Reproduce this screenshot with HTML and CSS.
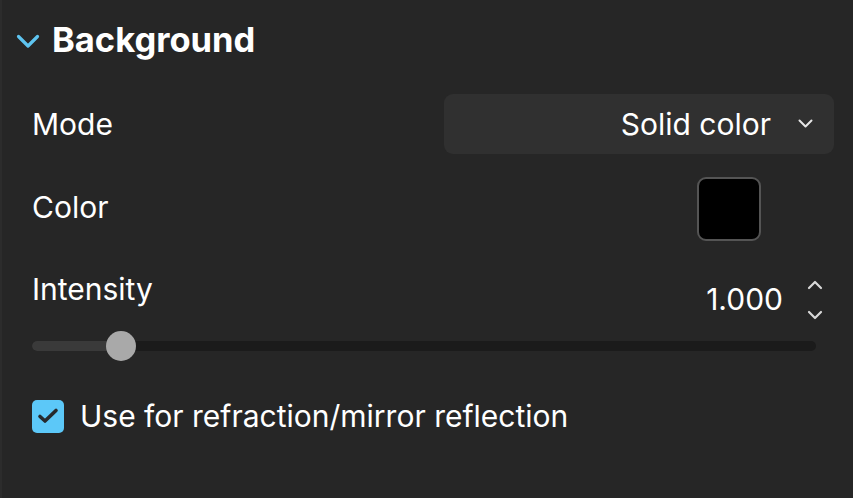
FILE: index.html
```html
<!DOCTYPE html>
<html>
<head>
<meta charset="utf-8">
<link rel="stylesheet" href="styles.css">
</head>
<body>
<div class="panel">
  <div class="header">
    <svg class="caret" width="24" height="16" viewBox="0 0 24 16"><path d="M2.5 2.5 L12 12 L21.5 2.5" fill="none" stroke="#5ec4f0" stroke-width="3.2" stroke-linecap="round" stroke-linejoin="round"/></svg>
    <span class="title">Background</span>
  </div>
  <div class="row mode-row">
    <span class="label">Mode</span>
    <div class="select">
      <span>Solid color</span>
      <svg width="15" height="10" viewBox="0 0 15 10"><path d="M1.5 1.5 L7.5 7.5 L13.5 1.5" fill="none" stroke="#e6e6e6" stroke-width="2" stroke-linecap="round" stroke-linejoin="round"/></svg>
    </div>
  </div>
  <div class="row color-row">
    <span class="label">Color</span>
    <div class="swatch"></div>
  </div>
  <div class="intensity">
    <span class="label">Intensity</span>
    <div class="value">
      <span>1.000</span>
      <div class="spin">
        <svg width="16" height="10" viewBox="0 0 16 10"><path d="M2 8 L8 2 L14 8" fill="none" stroke="#d8d8d8" stroke-width="2.2" stroke-linecap="round" stroke-linejoin="round"/></svg>
        <svg width="16" height="10" viewBox="0 0 16 10"><path d="M2 2 L8 8 L14 2" fill="none" stroke="#d8d8d8" stroke-width="2.2" stroke-linecap="round" stroke-linejoin="round"/></svg>
      </div>
    </div>
  </div>
  <div class="slider">
    <div class="fill" style="width: 89px"></div>
    <div class="thumb" style="left: 74px"></div>
  </div>
  <div class="check-row">
    <div class="checkbox">
      <svg width="24" height="18" viewBox="0 0 24 18"><path d="M4 9.5 L9 14 L20 3.5" fill="none" stroke="#262a2d" stroke-width="3.6" stroke-linecap="round" stroke-linejoin="round"/></svg>
    </div>
    <span class="label">Use for refraction/mirror reflection</span>
  </div>
</div>
</body>
</html>
```
FILE: styles.css
```css
html, body {
  margin: 0;
  padding: 0;
  background: #262626;
}
body {
  width: 853px;
  height: 498px;
  overflow: hidden;
  font-family: Inter, "Noto Sans", sans-serif;
  color: #ffffff;
}
.panel {
  height: 498px;
  box-sizing: border-box;
  border-left: 2px solid #2c2c2c;
  padding: 0 19px 0 30px;
}
.header {
  display: flex;
  align-items: center;
  height: 80px;
  margin-left: -16px;
}
.caret {
  margin-right: 12px;
  margin-top: 4px;
}
.title {
  font-size: 34.5px;
  font-weight: 700;
  margin-top: -2px;
}
.label {
  font-size: 30px;
}
.row {
  display: flex;
  align-items: center;
  justify-content: space-between;
}
.mode-row {
  margin-top: 14px;
  height: 60px;
}
.select {
  width: 390px;
  height: 60px;
  box-sizing: border-box;
  background: #303030;
  border-radius: 9px;
  display: flex;
  align-items: center;
  justify-content: flex-end;
  padding-right: 21px;
  gap: 27px;
  font-size: 30px;
}
.color-row {
  margin-top: 23px;
  height: 64px;
  padding-right: 73px;
}
.color-row .label {
  margin-top: -4px;
}
.swatch {
  width: 64px;
  height: 64px;
  box-sizing: border-box;
  background: #000;
  border: 2px solid #545454;
  border-radius: 9px;
}
.intensity {
  display: flex;
  justify-content: space-between;
  margin-top: 25px;
  height: 62px;
}
.intensity .label {
  margin-top: 5px;
}
.value {
  display: flex;
  align-items: center;
  font-size: 30px;
  margin-right: 11px;
  gap: 24px;
  margin-top: 12px;
  height: 42px;
}
.spin {
  display: flex;
  flex-direction: column;
  gap: 20px;
  margin-top: 2px;
}
.slider {
  position: relative;
  margin-top: 13px;
  height: 10px;
  width: 784px;
  background: #1b1b1b;
  border-radius: 5px;
}
.fill {
  height: 10px;
  background: #3a3a3a;
  border-radius: 5px;
}
.thumb {
  position: absolute;
  top: -10px;
  width: 30px;
  height: 30px;
  border-radius: 50%;
  background: #a9a9a9;
}
.check-row {
  display: flex;
  align-items: center;
  gap: 16px;
  margin-top: 47px;
}
.checkbox {
  width: 32px;
  height: 33px;
  border-radius: 5px;
  background: #5cc8f8;
  display: flex;
  align-items: center;
  justify-content: center;
}
```
